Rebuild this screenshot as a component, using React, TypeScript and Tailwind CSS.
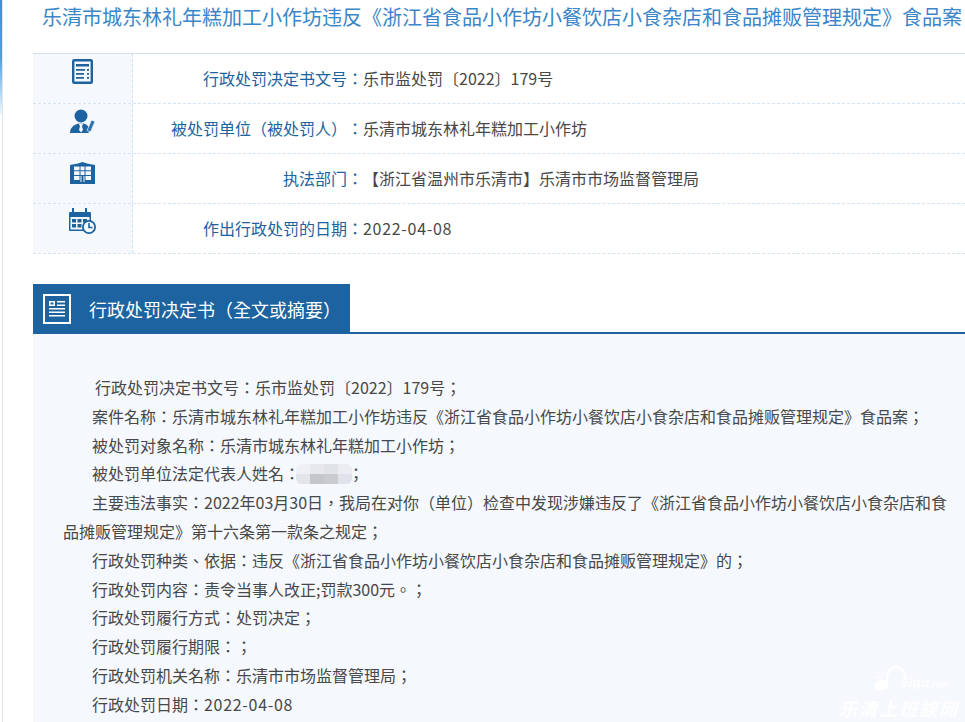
import React from 'react';

const BLUE = '#1c639f';
const PANEL = '#f5f8fd';

const DocIcon = () => (
    <svg width="21" height="25" viewBox="0 0 21 25" fill="none">
        <rect x="1.200" y="1.200" width="18.600" height="22.600" rx="1" stroke={BLUE} strokeWidth="2.400" fill={PANEL} />
        <path d="M4 5h13v2.400H4zM4 10h9v1.800H4zM15 10h2v1.800h-2zM4 14h8v1.800H4zM15 14h2v1.800h-2zM4 18h8v1.800H4zM15 18h2v1.800h-2z" fill={BLUE} />
    </svg>
);

const PersonIcon = () => (
    <svg width="25" height="24" viewBox="0 0 25 24">
        <circle cx="11" cy="7" r="6.500" fill={BLUE} />
        <path d="M0 24c0-5 3.500-8 8-9.500h6c3 1 5 3 5.500 6l-1 3.500z" fill={BLUE} />
        <path d="M8.500 14.500h5L12 17l1 4-2 2.500L9 21l1-4z" fill="#f0f5fb" />
        <path d="M21.500 11l3.500 1.500L20.500 23 17 21.500z" fill="#2f74ad" stroke={PANEL} strokeWidth="0.700" />
    </svg>
);

const BuildingIcon = () => (
    <svg width="25" height="22" viewBox="0 0 25 22">
        <path d="M0 3l8-1.500L12.500 0 17 1.500 25 3v19H0z" fill={BLUE} />
        <path d="M4 4.500h5.500v3.800H4zM10.500 4.500h4v3.800h-4zM15.500 4.500H21v3.800h-5.500zM4 9.300h5.500V13H4zM10.500 9.300h4V13h-4zM15.500 9.300H21V13h-5.500zM4 14h5.500v4H4zM15.500 14H21v4h-5.500zM10.500 14h1v6h-1zM13.500 14h1v6h-1z" fill={PANEL} />
    </svg>
);

const CalendarIcon = () => (
    <svg width="27" height="26" viewBox="0 0 27 26">
        <path d="M1 4h20a1 1 0 0 1 1 1v17a1 1 0 0 1-1 1H1a1 1 0 0 1-1-1V5a1 1 0 0 1 1-1z" fill={BLUE} />
        <rect x="1.500" y="9" width="19" height="12.500" fill={PANEL} />
        <path d="M3 0h2v6H3zM16 0h2v6h-2z" fill={BLUE} />
        <path d="M3 11h4v3.500H3zM8.500 11h4v3.500h-4zM14 11h4v3.500h-4zM3 16h4v3.500H3zM8.500 16h4v3.500h-4z" fill={BLUE} />
        <circle cx="20" cy="19" r="6.100" fill={PANEL} stroke={BLUE} strokeWidth="1.800" />
        <path d="M20 15v4.500h3.500" stroke={BLUE} strokeWidth="1.600" fill="none" />
    </svg>
);

const ArticleIcon = () => (
    <svg width="28" height="30" viewBox="0 0 28 30" fill="none">
        <rect x="1" y="1" width="26" height="28" stroke="#fff" strokeWidth="2" />
        <path d="M6 7h6v5H6zM14 7h8v1.500h-8zM14 10.500h8V12h-8zM6 14h16v1.500H6zM6 17.500h16V19H6zM6 21h16v1.500H6z" fill="#fff" />
        <rect x="7.500" y="8.500" width="3" height="2" fill={BLUE} />
    </svg>
);

const WatermarkLogo = () => (
    <svg width="36" height="27" viewBox="0 0 36 27" fill="none" stroke="#fff" strokeWidth="2">
        <path d="M4 25c-3-5 4-9 9-8 4 1 3 7-2 8-3 .6-5 .3-7 0z" fill="#fff" />
        <path d="M15 17C14 8 20 2 25 3c6 1 9 6 8 12" />
        <path d="M10 3l3 8M4 7l8 6M2 13l9 2" strokeWidth="1" />
    </svg>
);

const rows = [
    { icon: <DocIcon />, label: '行政处罚决定书文号：', value: '乐市监处罚〔2022〕179号', pt: 'pt-[5px]' },
    { icon: <PersonIcon />, label: '被处罚单位（被处罚人）：', value: '乐清市城东林礼年糕加工小作坊', pt: 'pt-[5px]' },
    { icon: <BuildingIcon />, label: '执法部门：', value: '【浙江省温州市乐清市】乐清市市场监督管理局', pt: 'pt-[8px]' },
    { icon: <CalendarIcon />, label: '作出行政处罚的日期：', value: '2022-04-08', pt: 'pt-[4px]', date: true },
];

const lines = [
    { text: '行政处罚决定书文号：乐市监处罚〔2022〕179号；', indent: 'indent-[32px]' },
    { text: '案件名称：乐清市城东林礼年糕加工小作坊违反《浙江省食品小作坊小餐饮店小食杂店和食品摊贩管理规定》食品案；' },
    { text: '被处罚对象名称：乐清市城东林礼年糕加工小作坊；' },
    { text: 'name' },
    { text: '主要违法事实：2022年03月30日，我局在对你（单位）检查中发现涉嫌违反了《浙江省食品小作坊小餐饮店小食杂店和食品摊贩管理规定》第十六条第一款条之规定；' },
    { text: '行政处罚种类、依据：违反《浙江省食品小作坊小餐饮店小食杂店和食品摊贩管理规定》的；' },
    { text: '行政处罚内容：责令当事人改正;罚款300元。；' },
    { text: '行政处罚履行方式：处罚决定；' },
    { text: '行政处罚履行期限：；' },
    { text: '行政处罚机关名称：乐清市市场监督管理局；' },
    { text: '行政处罚日期：', date: '2022-04-08' },
];

const mosaic = ['bg-[#eef0f4]', 'bg-[#e6e8ec]', 'bg-[#e0e3e8]', 'bg-[#ebedf2]', 'bg-[#e2e4ea]', 'bg-[#c4c6cb]', 'bg-[#c9cbcf]', 'bg-[#dfe2ea]'];

export default function App() {
    return (
        <div className="h-[722px] w-[965px] overflow-hidden bg-white flex [text-spacing-trim:space-all] font-['Noto_Sans_CJK_TC','Noto_Sans',sans-serif]">
            {/* Left edge */}
            <div className="w-[2px] h-[115px] shrink-0 bg-gradient-to-b from-[#3a8fe2] via-[#4ba0e2] to-[#f0f8fc]" />
            <div className="w-[31px] shrink-0">
                <div className="w-[1px] h-[722px] bg-[#e2e4e7]" />
            </div>

            <div className="w-[932px] shrink-0 flex flex-col">
                {/* Title */}
                <div className="h-[53px] shrink-0 pl-[9px] whitespace-nowrap overflow-hidden text-[20px] leading-[33px] text-[#3a86c8]">
                    乐清市城东林礼年糕加工小作坊违反《浙江省食品小作坊小餐饮店小食杂店和食品摊贩管理规定》食品案
                </div>

                {/* Info table */}
                <div className="border-t border-[#cfe0ee] shrink-0">
                    {rows.map((row) => (
                        <div key={row.label} className="flex h-[50px] border-b border-dashed border-[#d5e3f0] text-[16px]">
                            <div className={`w-[100px] shrink-0 bg-[#f5f8fd] border-r border-dashed border-[#cfe2f3] flex justify-center ${row.pt}`}>
                                {row.icon}
                            </div>
                            <div className="w-[230px] shrink-0 text-right pt-[12px] leading-[24px] text-[#1c639f]">{row.label}</div>
                            <div className={`pt-[12px] leading-[24px] text-[#484848] ${row.date ? 'tracking-[0.7px]' : ''}`}>{row.value}</div>
                        </div>
                    ))}
                </div>

                {/* Section heading */}
                <div className="mt-[30px] h-[50px] border-b-2 border-[#1c639f] shrink-0">
                    <div className="w-[317px] h-[50px] bg-[#1c639f] flex items-center pl-[10px] text-white text-[18px]">
                        <ArticleIcon />
                        <span className="ml-[18px]">行政处罚决定书（全文或摘要）</span>
                    </div>
                </div>

                {/* Full text */}
                <div className="flex-1 bg-[#f5f8fd] pt-[39px] pl-[30px] pr-[14px] text-[16px] leading-[28.8px] text-[#484848]">
                    {lines.map((line) =>
                        line.text === 'name' ? (
                            <p key="name" className="indent-[29px]">
                                被处罚单位法定代表人姓名：
                                <span className="relative -top-[2px] -mx-[4px] inline-grid grid-cols-4 w-[56px] h-[20px] align-middle rounded-md overflow-hidden">
                                    {mosaic.map((cell, i) => (
                                        <span key={i} className={cell} />
                                    ))}
                                </span>
                                ；
                            </p>
                        ) : (
                            <p key={line.text} className={line.indent ?? 'indent-[29px]'}>
                                {line.text}
                                {line.date && <span className="tracking-[0.7px]">{line.date}</span>}
                            </p>
                        )
                    )}
                    {/* Watermark */}
                    <div className="relative">
                        <div className="absolute left-[809px] top-[-55px] flex items-end text-white">
                            <WatermarkLogo />
                            <span className="-ml-[8px] italic font-bold text-[13px] leading-[14px] whitespace-nowrap">5iqu<span className="text-[8px]">.com</span></span>
                        </div>
                        <span className="absolute right-[-8px] top-[-25px] text-[18px] leading-[28px] font-bold italic tracking-[2px] text-white whitespace-nowrap">乐清上班族网</span>
                    </div>
                </div>
            </div>
        </div>
    );
}
